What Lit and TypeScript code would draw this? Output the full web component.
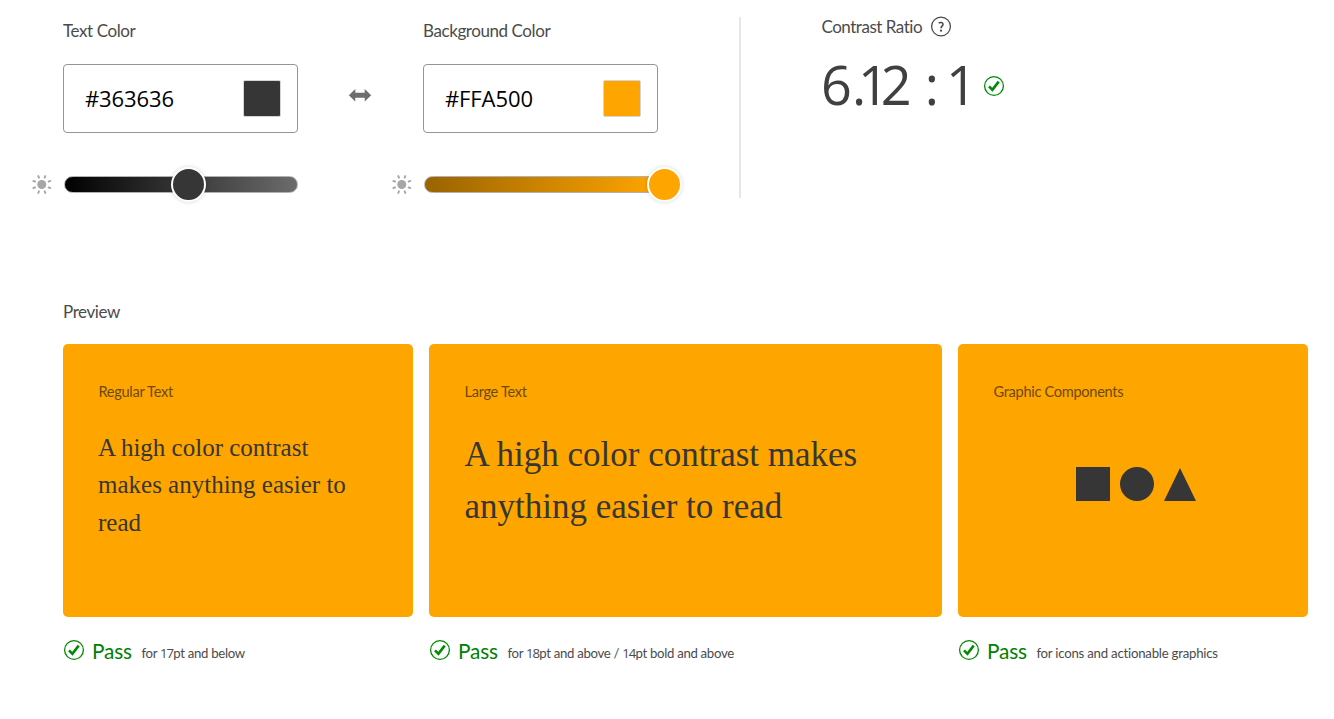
import { LitElement, html, css, svg } from "lit";
import { customElement, property } from "lit/decorators.js";

const check = html`<svg class="check" width="22" height="22" viewBox="0 0 22 22" fill="none" stroke="#008a00">
  <circle cx="11" cy="11" r="9.4" stroke-width="1.3"></circle>
  <path d="M6 11.3 L9.4 14.8 L15.7 6.6" stroke-width="2.6"></path>
</svg>`;

@customElement("color-field")
class ColorField extends LitElement {
  @property() label = "";
  @property() value = "";
  @property() track = "";
  @property({ type: Number }) thumb = 0;

  static styles = css`
    :host { display: block; width: 235px; font-family: Lato, sans-serif; }
    .label { margin-top: 21px; font-size: 17px; letter-spacing: -.42px; line-height: 20px; color: #4b4b4b; white-space: nowrap; }
    .input {
      box-sizing: border-box; height: 69px; margin-top: 23px; padding: 0 16px 0 21px;
      border: 1px solid #959595; border-radius: 4px;
      display: flex; align-items: center; justify-content: space-between;
    }
    .hex { margin-bottom: 2px; font: 22px "Open Sans", sans-serif; letter-spacing: -.1px; color: #000; }
    .swatch { box-sizing: border-box; width: 38px; height: 37px; border: 1px solid #d5d5d5; border-radius: 2px; }
    .slider { display: flex; align-items: center; margin: 40px 0 0 -32px; height: 23px; }
    .sun { flex: none; width: 21px; height: 21px; margin-right: 12px; }
    .track {
      position: relative; box-sizing: border-box; flex: none; width: 234px; height: 17px;
      border: 1px solid #b1b1b1; border-radius: 9px;
    }
    .thumb {
      position: absolute; top: -10px; width: 31px; height: 31px; border: 2px solid #fff;
      border-radius: 50%; box-shadow: 0 0 4px rgba(0, 0, 0, .16);
    }
  `;

  render() {
    const rays = [22.5, 67.5, 112.5, 157.5, 202.5, 247.5, 292.5, 337.5];
    return html`
      <div class="label">${this.label}</div>
      <div class="input">
        <span class="hex">${this.value}</span>
        <span class="swatch" style="background:${this.value}"></span>
      </div>
      <div class="slider">
        <svg class="sun" viewBox="0 0 21 21">
          <circle cx="10.8" cy="10.5" r="4.5" fill="#a6a6a6"></circle>
          ${rays.map((r) => svg`<path d="M10.8 .6 V3.9" stroke="#a6a6a6" stroke-width="1.9" transform="rotate(${r} 10.8 10.5)"></path>`)}
        </svg>
        <div class="track" style="background:${this.track} border-box">
          <div class="thumb" style="left:${this.thumb}px;background:${this.value}"></div>
        </div>
      </div>`;
  }
}

@customElement("app-root")
class AppRoot extends LitElement {
  static styles = css`
    :host {
      display: block; box-sizing: border-box; width: 1334px; height: 719px; overflow: hidden;
      background: #fff; color: #4b4b4b; font: 17px/20px Lato, sans-serif;
    }
    .top { display: flex; height: 302px; padding-left: 63px; }
    .swap { width: 24px; height: 16px; margin: 87px 51px 0 50px; }
    .divider { width: 2px; height: 181px; margin: 17px 80px 0 81px; background: #e6e6e6; }
    .ratio-head { display: flex; align-items: center; height: 20px; margin-top: 17px; white-space: nowrap; }
    .ratio-head span { width: 109px; padding-left: .5px; box-sizing: border-box; letter-spacing: -.48px; }
    .ratio-row { display: flex; margin: 16px 0 0; }
    .ratio { width: 153px; font: 54px/62px "Open Sans", sans-serif; color: #404040; white-space: pre; }
    .dot { letter-spacing: -8.2px; }
    .one { letter-spacing: -8px; }
    .two { letter-spacing: -.5px; }
    .colon { letter-spacing: -3.5px; }
    .ratio-row .check { margin: 22px 0 0 9px; }
    .preview { padding-left: 63px; }
    .heading { letter-spacing: -.4px; }
    .cards { display: grid; grid-template-columns: 350px 513px 350px; column-gap: 16px; margin-top: 22px; }
    .card { box-sizing: border-box; height: 273px; padding: 38px 35px 0 35.5px; border-radius: 5px; background: #ffa500; }
    .kind { font-size: 14.6px; letter-spacing: -.31px; line-height: 20px; color: #6c4a0d; }
    .sample { font-family: "Liberation Serif", serif; color: #363636; }
    .regular { margin: 26.5px 0 0 -.5px; font-size: 25px; line-height: 37.5px; }
    .large { margin-top: 27.4px; font-size: 35px; line-height: 52px; }
    .shapes { display: block; margin: 64px 0 0 81.5px; }
    .result { display: flex; height: 24px; margin-top: 22px; }
    .result span { line-height: 24px; white-space: nowrap; }
    .pass { margin-left: 7px; font-size: 20.8px; letter-spacing: -.15px; color: #008000; }
    .note { margin: 2px 0 0 9.5px; font-size: 13.2px; letter-spacing: -.22px; }
    .result .tight { letter-spacing: -.31px; }
    .num { font-family: "Open Sans", sans-serif; letter-spacing: -.9px; }
  `;

  result(note: unknown, tight = false) {
    return html`<div class="result">${check}<span class="pass">Pass</span><span class="note ${tight ? "tight" : ""}">${note}</span></div>`;
  }

  render() {
    return html`
      <div class="top">
        <color-field label="Text Color" value="#363636" track="linear-gradient(90deg,#000,#6c6c6c)" .thumb=${106}></color-field>
        <svg class="swap" viewBox="0 0 24 16"><path d="M.8 8.2 L7.3 2 V5.7 H16.7 V2 L23.2 8.2 L16.7 14.4 V10.7 H7.3 V14.4 Z" fill="#6e6e6e"></path></svg>
        <color-field label="Background Color" value="#FFA500" track="linear-gradient(90deg,#996300,#ffa500)" .thumb=${222}></color-field>
        <div class="divider"></div>
        <div>
          <div class="ratio-head">
            <span>Contrast Ratio</span>
            <svg width="22" height="22" viewBox="0 0 22 22" fill="none" stroke="#4b4b4b">
              <circle cx="11" cy="10.5" r="9.4" stroke-width="1.3"></circle>
              <path d="M8.7 7.1 C10 6.1 13 6.1 13 8.3 C13 10.1 11 10.2 11 12.3" stroke-width="1.6"></path>
              <circle cx="11" cy="14.7" r="1.1" fill="#4b4b4b" stroke="none"></circle>
            </svg>
          </div>
          <div class="ratio-row">
            <span class="ratio">6<span class="dot">.</span><span class="one">1</span><span class="two">2 </span><span class="colon">: </span>1</span>
            ${check}
          </div>
        </div>
      </div>
      <div class="preview">
        <div class="heading">Preview</div>
        <div class="cards">
          <div>
            <div class="card"><div class="kind">Regular Text</div><div class="sample regular">A high color contrast makes anything easier to read</div></div>
            ${this.result(html`for <span class="num">17</span>pt and below`, true)}
          </div>
          <div>
            <div class="card"><div class="kind">Large Text</div><div class="sample large">A high color contrast makes anything easier to read</div></div>
            ${this.result(html`for <span class="num">18</span>pt and above / <span class="num">14</span>pt bold and above`, true)}
          </div>
          <div>
            <div class="card">
              <div class="kind">Graphic Components</div>
              <svg class="shapes" width="122" height="36" viewBox="0 0 122 36" fill="#363636">
                <rect x="1" y="1" width="34" height="34"></rect>
                <circle cx="62" cy="18" r="17"></circle>
                <path d="M105 2 L121 35 H89 Z"></path>
              </svg>
            </div>
            ${this.result("for icons and actionable graphics")}
          </div>
        </div>
      </div>`;
  }
}
